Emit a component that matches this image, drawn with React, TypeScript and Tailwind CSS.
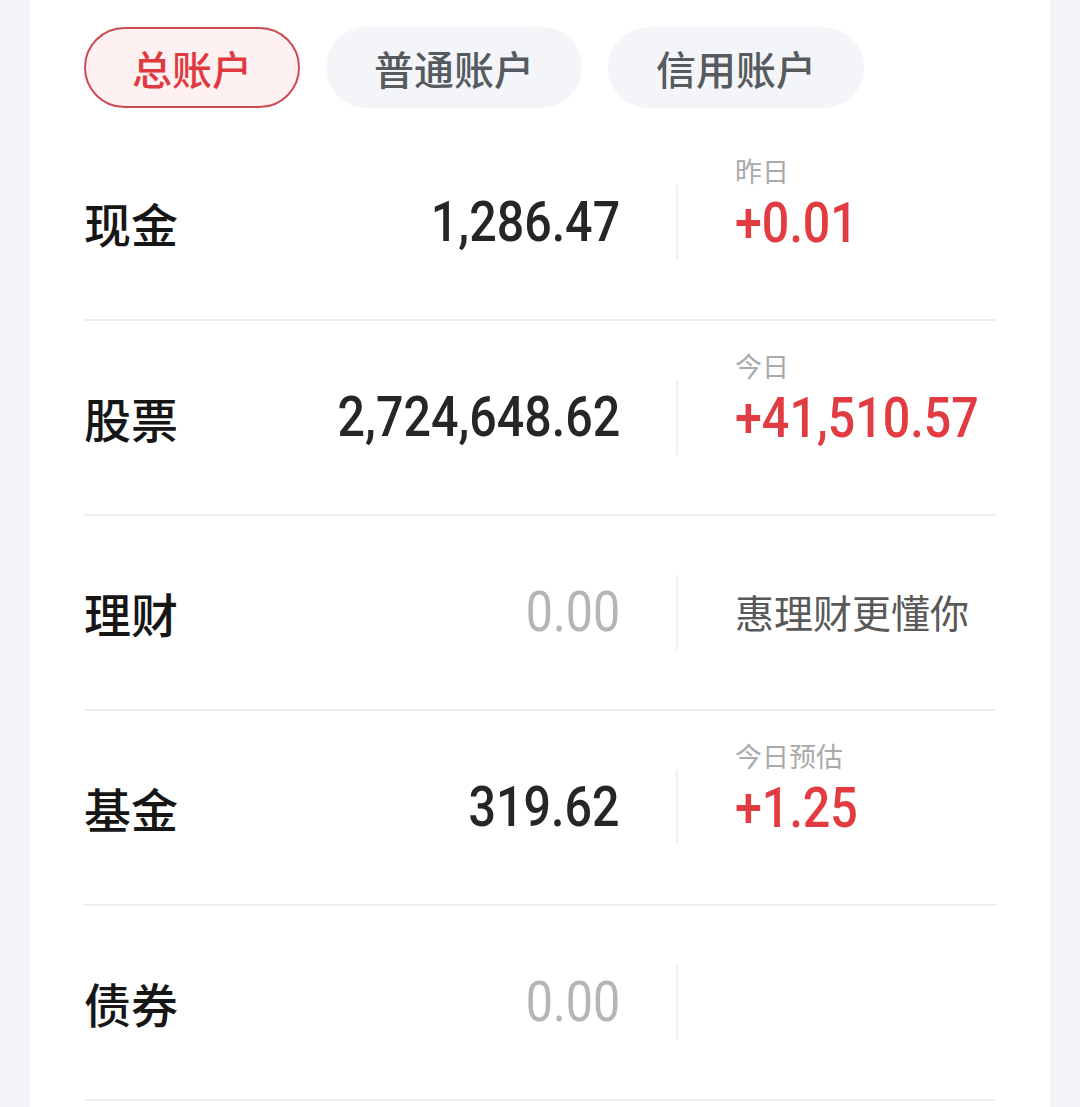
import { useState } from 'react';

interface AssetRow {
  name: string;
  amount: string;
  muted?: boolean;
  tag?: string;
  change?: string;
  hint?: string;
}

const rows: AssetRow[] = [
  { name: '现金', amount: '1,286.47', tag: '昨日', change: '+0.01' },
  { name: '股票', amount: '2,724,648.62', tag: '今日', change: '+41,510.57' },
  { name: '理财', amount: '0.00', muted: true, hint: '惠理财更懂你' },
  { name: '基金', amount: '319.62', tag: '今日预估', change: '+1.25' },
  { name: '债券', amount: '0.00', muted: true },
];

const tabs = ['总账户', '普通账户', '信用账户'];

const cjk = 'font-["Noto_Sans_CJK_SC","Noto_Sans",sans-serif]';
const num = 'font-["Roboto","Liberation_Sans",sans-serif]';

export default function App() {
  const [active, setActive] = useState(0);

  return (
    <div className="min-h-[1107px] bg-[#f4f5f8]">
      <div className={`mx-[30px] min-h-[1107px] bg-white px-[54px] ${cjk}`}>
        {/* Account tabs */}
        <div className="flex gap-[26px] pt-[27px] pb-[18px]">
          {tabs.map((t, i) => (
            <button
              key={t}
              onClick={() => setActive(i)}
              className={
                i === active
                  ? 'h-[81px] shrink-0 rounded-full border-2 border-[#cc4a50] bg-[#fdf1f1] px-[46px] text-[40px] font-medium leading-none text-[#e03a40]'
                  : 'h-[81px] shrink-0 rounded-full bg-[#f3f5f8] px-[48px] text-[40px] font-medium leading-none text-[#565b60]'
              }
            >
              {t}
            </button>
          ))}
        </div>

        {/* Asset rows */}
        {rows.map((r) => (
          <div key={r.name} className="flex h-[195px] items-center border-b-2 border-[#ededed]">
            <div className="flex w-[536px] shrink-0 items-center justify-between">
              <span className="text-[47px] font-medium leading-none text-[#161616]">{r.name}</span>
              <span
                className={`inline-block origin-right scale-x-[0.88] text-[55px] leading-none whitespace-nowrap ${num} ${
                  r.muted ? 'font-normal text-[#b5b5b5]' : 'font-medium text-[#262626]'
                }`}
              >
                {r.amount}
              </span>
            </div>
            <div className="ml-[56px] h-[75px] w-[2px] shrink-0 bg-[#f0f0f0]" />
            <div className="ml-[57px] min-w-0 whitespace-nowrap">
              {r.change && (
                <div className="flex flex-col pb-[41px]">
                  <span className="text-[27px] leading-[30px] text-[#aaaaaa]">{r.tag}</span>
                  <span
                    className={`mt-[11px] inline-block origin-left scale-x-[0.88] text-[55px] leading-[52px] font-medium ${num} text-[#e23b42]`}
                  >
                    {r.change}
                  </span>
                </div>
              )}
              {r.hint && <span className="text-[39px] leading-none text-[#595959]">{r.hint}</span>}
            </div>
          </div>
        ))}
      </div>
    </div>
  );
}
